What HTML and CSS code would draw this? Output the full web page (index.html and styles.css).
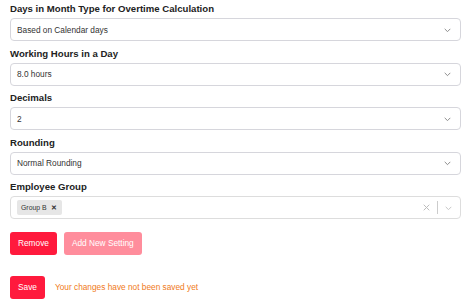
FILE: index.html
```html
<!DOCTYPE html>
<html>
<head>
<meta charset="utf-8">
<link rel="stylesheet" href="styles.css">
</head>
<body>
<div class="form">
  <div class="field">
    <label class="label">Days in Month Type for Overtime Calculation</label>
    <div class="select">
      <span class="value">Based on Calendar days</span>
      <svg class="chev" viewBox="0 0 10 6" width="7" height="4.5"><path d="M1 1 L5 5 L9 1" fill="none" stroke="#777" stroke-width="1.2"/></svg>
    </div>
  </div>
  <div class="field">
    <label class="label">Working Hours in a Day</label>
    <div class="select">
      <span class="value">8.0 hours</span>
      <svg class="chev" viewBox="0 0 10 6" width="7" height="4.5"><path d="M1 1 L5 5 L9 1" fill="none" stroke="#777" stroke-width="1.2"/></svg>
    </div>
  </div>
  <div class="field">
    <label class="label">Decimals</label>
    <div class="select">
      <span class="value">2</span>
      <svg class="chev" viewBox="0 0 10 6" width="7" height="4.5"><path d="M1 1 L5 5 L9 1" fill="none" stroke="#777" stroke-width="1.2"/></svg>
    </div>
  </div>
  <div class="field">
    <label class="label">Rounding</label>
    <div class="select">
      <span class="value">Normal Rounding</span>
      <svg class="chev" viewBox="0 0 10 6" width="7" height="4.5"><path d="M1 1 L5 5 L9 1" fill="none" stroke="#777" stroke-width="1.2"/></svg>
    </div>
  </div>
  <div class="field">
    <label class="label">Employee Group</label>
    <div class="select multi">
      <div class="chips">
        <span class="chip">Group B <span class="chip-x">✕</span></span>
      </div>
      <div class="indicators">
        <svg class="clear" viewBox="0 0 10 10" width="7" height="7"><path d="M1 1 L9 9 M9 1 L1 9" fill="none" stroke="#bbb" stroke-width="1.4"/></svg>
        <span class="sep"></span>
        <svg class="chev" viewBox="0 0 10 6" width="7" height="4.5"><path d="M1 1 L5 5 L9 1" fill="none" stroke="#bbb" stroke-width="1.2"/></svg>
      </div>
    </div>
  </div>
  <div class="actions">
    <button class="btn">Remove</button>
    <button class="btn disabled">Add New Setting</button>
  </div>
  <div class="save-row">
    <button class="btn">Save</button>
    <span class="msg">Your changes have not been saved yet</span>
  </div>
</div>
</body>
</html>
```
FILE: styles.css
```css
html, body {
  margin: 0;
  padding: 0;
  background: #fff;
}
body {
  font-family: "Liberation Sans", Arial, sans-serif;
  color: #222;
}
.form {
  padding: 3px 7px 0 10px;
  display: flex;
  flex-direction: column;
}
.field {
  display: flex;
  flex-direction: column;
  margin-bottom: 6.25px;
}
.label {
  font-size: 9.6px;
  font-weight: bold;
  line-height: 12px;
  margin-bottom: 3.3px;
  color: #222;
}
.select {
  height: 23px;
  box-sizing: border-box;
  border: 1px solid #d6d6dc;
  border-radius: 4px;
  display: flex;
  align-items: center;
  padding: 0 9px 0 6px;
  background: #fff;
}
.value {
  flex: 1;
  font-size: 8.3px;
  color: #333;
}
.chev {
  display: block;
}
.multi {
  padding: 0 8px 0 6px;
  border-color: #ddd;
}
.chips {
  flex: 1;
  display: flex;
}
.chip {
  background: #e6e6e6;
  border-radius: 2px;
  font-size: 6.9px;
  color: #333;
  height: 15px;
  display: inline-flex;
  align-items: center;
  padding: 0 5px 0 4px;
  gap: 4px;
}
.chip-x {
  font-size: 7px;
  font-weight: bold;
  color: #333;
}
.indicators {
  display: flex;
  align-items: center;
  gap: 7px;
}
.sep {
  width: 1px;
  height: 13px;
  background: #ccc;
}
.actions {
  display: flex;
  gap: 7px;
  margin-top: 6px;
}
.btn {
  font-family: "Liberation Sans", Arial, sans-serif;
  font-size: 8.3px;
  color: #fff;
  background: #ff1a3d;
  border: none;
  border-radius: 3px;
  height: 23px;
  padding: 0 8px;
  margin: 0;
}
.btn.disabled {
  background: #ff8d9c;
}
.save-row {
  display: flex;
  align-items: center;
  gap: 10px;
  margin-top: 21px;
}
.msg {
  font-size: 8.3px;
  color: #f07a1a;
}
```
